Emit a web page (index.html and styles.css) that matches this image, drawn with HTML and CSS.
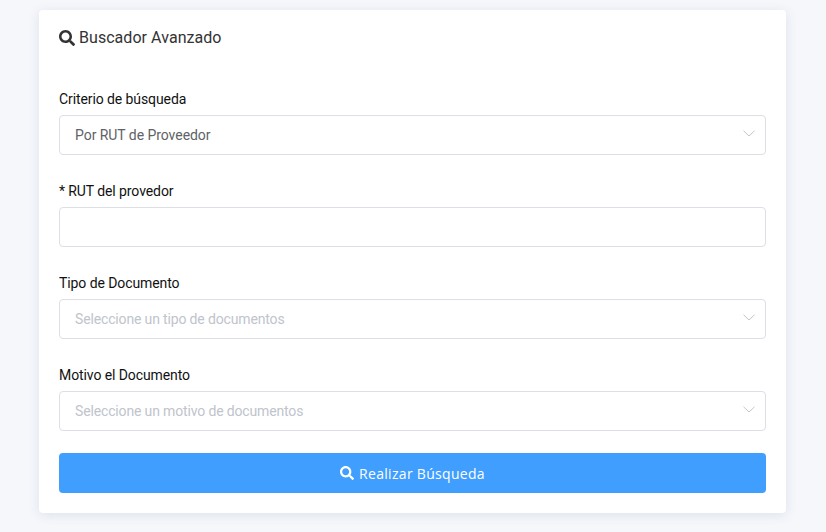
FILE: index.html
```html
<!DOCTYPE html>
<html>
<head>
<meta charset="utf-8">
<title>Buscador Avanzado</title>
<link rel="stylesheet" href="styles.css">
</head>
<body>

<div class="card">
	<div class="card-title">
		<svg class="icon-search" viewBox="0 0 512 512"><path d="M505 442.7L405.3 343c-4.5-4.5-10.6-7-17-7H372c27.6-35.3 44-79.7 44-128C416 93.1 322.9 0 208 0S0 93.1 0 208s93.1 208 208 208c48.3 0 92.7-16.4 128-44v16.3c0 6.4 2.5 12.5 7 17l99.7 99.7c9.4 9.4 24.6 9.4 33.9 0l28.3-28.3c9.4-9.4 9.4-24.6.1-34zM208 336c-70.7 0-128-57.2-128-128 0-70.7 57.2-128 128-128 70.7 0 128 57.2 128 128 0 70.7-57.2 128-128 128z"/></svg>
		Buscador Avanzado
	</div>

	<div class="field">
		<div class="field-label">Criterio de búsqueda</div>
		<div class="select">
			<span class="select-value">Por RUT de Proveedor</span>
			<svg class="chevron" viewBox="0 0 12 7"><path d="M.5.8 6 6 11.5.8"/></svg>
		</div>
	</div>

	<div class="field">
		<div class="field-label">* RUT del provedor</div>
		<div class="select"></div>
	</div>

	<div class="field">
		<div class="field-label">Tipo de Documento</div>
		<div class="select">
			<span class="select-placeholder">Seleccione un tipo de documentos</span>
			<svg class="chevron" viewBox="0 0 12 7"><path d="M.5.8 6 6 11.5.8"/></svg>
		</div>
	</div>

	<div class="field last">
		<div class="field-label">Motivo el Documento</div>
		<div class="select">
			<span class="select-placeholder">Seleccione un motivo de documentos</span>
			<svg class="chevron" viewBox="0 0 12 7"><path d="M.5.8 6 6 11.5.8"/></svg>
		</div>
	</div>

	<div class="search-button">
		<svg class="icon-search" viewBox="0 0 512 512"><path d="M505 442.7L405.3 343c-4.5-4.5-10.6-7-17-7H372c27.6-35.3 44-79.7 44-128C416 93.1 322.9 0 208 0S0 93.1 0 208s93.1 208 208 208c48.3 0 92.7-16.4 128-44v16.3c0 6.4 2.5 12.5 7 17l99.7 99.7c9.4 9.4 24.6 9.4 33.9 0l28.3-28.3c9.4-9.4 9.4-24.6.1-34zM208 336c-70.7 0-128-57.2-128-128 0-70.7 57.2-128 128-128 70.7 0 128 57.2 128 128 0 70.7-57.2 128-128 128z"/></svg>
		Realizar Búsqueda
	</div>
</div>

</body>
</html>
```

FILE: styles.css
```css
body {
	margin: 0;
	padding: 10px 40px 18px 39px;
	background-color: #f5f7fb;
	font-family: Roboto, "Liberation Sans", sans-serif;
}

.card {
	height: 503px;
	box-sizing: border-box;
	padding: 0 20px;
	background-color: #fff;
	border-radius: 4px;
	box-shadow: 0 2px 12px rgba(60, 70, 110, 0.12);
}

.card-title {
	display: flex;
	align-items: center;
	gap: 4px;
	height: 55px;
	font-size: 16px;
	letter-spacing: 0.05px;
	color: #333;
	margin-bottom: 24px;
}

.icon-search {
	width: 16px;
	height: 16px;
	fill: currentColor;
}

.field {
	margin-bottom: 26px;
}

.field.last {
	margin-bottom: 22px;
}

.field-label {
	height: 20px;
	line-height: 20px;
	margin: 0 0 6px;
	font-size: 14px;
	letter-spacing: -0.09px;
	color: #111;
}

.select {
	display: flex;
	align-items: center;
	justify-content: space-between;
	height: 40px;
	box-sizing: border-box;
	padding: 0 10px 0 15px;
	border: 1px solid #dcdfe6;
	border-radius: 4px;
	font-size: 14px;
}

.select-value {
	color: #606266;
	letter-spacing: -0.05px;
}

.select-placeholder {
	color: #c0c4cc;
	letter-spacing: -0.15px;
}

.chevron {
	width: 12px;
	height: 7px;
	margin-top: -3px;
	fill: none;
	stroke: #c0c4cc;
	stroke-width: 1;
}

.search-button {
	display: flex;
	align-items: center;
	justify-content: center;
	gap: 5px;
	height: 40px;
	background-color: #409eff;
	border-radius: 4px;
	color: #fff;
	font-family: "Open Sans", sans-serif;
	font-size: 14px;
	letter-spacing: 0.3px;
}

.search-button .icon-search {
	width: 14px;
	height: 14px;
}
```
